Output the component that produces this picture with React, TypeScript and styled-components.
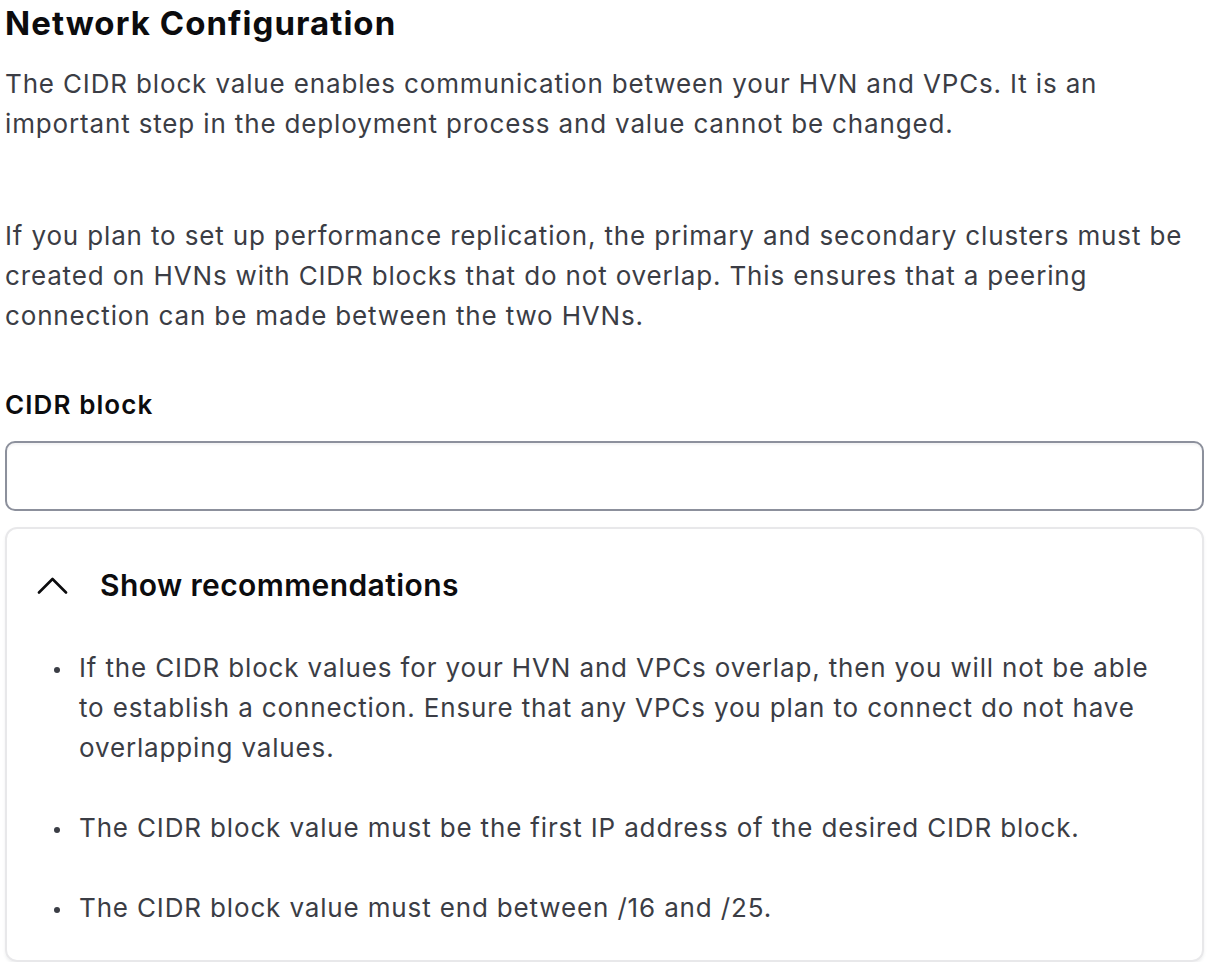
import * as React from 'react';
import styled, { createGlobalStyle } from 'styled-components';

const Global = createGlobalStyle`
  body {
    margin: 0;
    background: #ffffff;
    font-family: Inter, "Noto Sans", sans-serif;
    -webkit-font-smoothing: antialiased;
  }
`;

const Page = styled.main`
  padding: 0 16px 0 5px;
`;

const Title = styled.h1`
  margin: 0;
  font-size: 33px;
  line-height: 46px;
  font-weight: 700;
  color: #0c0c0e;
  letter-spacing: 1.05px;
`;

const Text = styled.p<{ $gap?: number }>`
  margin: ${(p) => p.$gap ?? 0}px 0 0;
  font-size: 26px;
  line-height: 40px;
  letter-spacing: 0.85px;
  color: #3b3d45;
`;

const Label = styled.label`
  display: block;
  margin-top: 49px;
  font-size: 26px;
  line-height: 40px;
  font-weight: 600;
  letter-spacing: 1.1px;
  color: #0c0c0e;
`;

const Input = styled.input`
  display: block;
  box-sizing: border-box;
  width: 100%;
  height: 70px;
  margin-top: 16px;
  border: 2px solid #8c909c;
  border-radius: 10px;
  box-shadow: inset 0 2px 2px rgba(101, 106, 118, 0.08);
  font: inherit;
  font-size: 26px;
  padding: 0 16px;
  outline: none;
`;

const Card = styled.section`
  margin-top: 16px;
  border: 2px solid #e8e8ea;
  border-radius: 12px;
  box-shadow: 0 2px 3px rgba(97, 104, 117, 0.1);
  padding: 36px 0 32px;
`;

const Toggle = styled.button`
  display: flex;
  align-items: center;
  gap: 32px;
  border: 0;
  background: none;
  padding: 0 0 0 30px;
  font: inherit;
  font-size: 30px;
  line-height: 40px;
  font-weight: 600;
  letter-spacing: 0.4px;
  color: #0c0c0e;
  cursor: pointer;
`;

const List = styled.ul`
  list-style: none;
  margin: 43px 0 0;
  padding: 0 40px 0 72px;
  display: flex;
  flex-direction: column;
  gap: 40px;
`;

const Item = styled.li`
  position: relative;
  font-size: 26px;
  line-height: 40px;
  letter-spacing: 0.85px;
  color: #3b3d45;
  &::before {
    content: '';
    position: absolute;
    left: -25px;
    top: 19px;
    width: 6px;
    height: 6px;
    border-radius: 50%;
    background: #3b3d45;
  }
`;

const Chevron = () => (
  <svg width="31" height="17" viewBox="0 0 31 17" fill="none">
    <path d="M2 15.5 15.5 2 29 15.5" stroke="#0c0c0e" strokeWidth="2.6" strokeLinecap="round" strokeLinejoin="round" />
  </svg>
);

const tips = [
  'If the CIDR block values for your HVN and VPCs overlap, then you will not be able to establish a connection. Ensure that any VPCs you plan to connect do not have overlapping values.',
  'The CIDR block value must be the first IP address of the desired CIDR block.',
  'The CIDR block value must end between /16 and /25.',
];

export default function App() {
  return (
    <>
      <Global />
      <Page>
        <Title>Network Configuration</Title>
        <Text $gap={18}>
          The CIDR block value enables communication between your HVN and VPCs. It is an important step in the deployment process and value cannot be changed.
        </Text>
        <Text $gap={72}>
          If you plan to set up performance replication, the primary and secondary clusters must be created on HVNs with CIDR blocks that do not overlap. This ensures that a peering connection can be made between the two HVNs.
        </Text>
        <Label htmlFor="cidr">CIDR block</Label>
        <Input id="cidr" type="text" />
        <Card>
          <Toggle type="button">
            <Chevron />
            Show recommendations
          </Toggle>
          <List>
            {tips.map((t) => (
              <Item key={t}>{t}</Item>
            ))}
          </List>
        </Card>
      </Page>
    </>
  );
}
